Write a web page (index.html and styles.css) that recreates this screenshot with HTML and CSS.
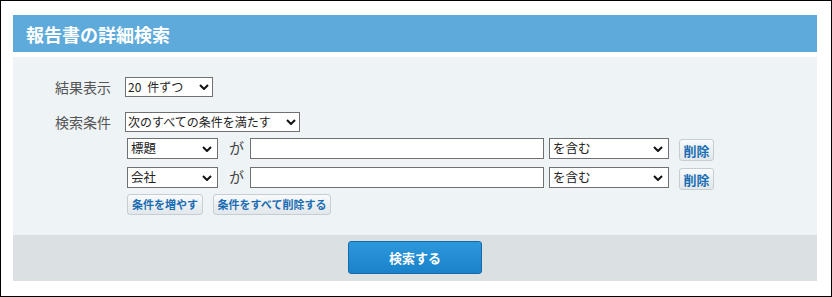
FILE: index.html
```html
<!DOCTYPE html>
<html lang="ja">
<head>
<meta charset="utf-8">
<title>報告書の詳細検索</title>
<link rel="stylesheet" href="styles.css">
</head>
<body>
<div class="frame">
  <div class="header"><h1 class="title">報告書の詳細検索</h1></div>
  <div class="panel">
    <div class="row row-count">
      <span class="label">結果表示</span>
      <div class="select sel-count"><span class="sel-text">20<span class="sp"></span>件ずつ</span><svg class="chev" width="10" height="6" viewBox="0 0 10 6"><path d="M1 1 L5 5 L9 1" /></svg></div>
    </div>
    <div class="row">
      <span class="label">検索条件</span>
      <div class="select sel-match"><span class="sel-text">次のすべての条件を満たす</span><svg class="chev" width="10" height="6" viewBox="0 0 10 6"><path d="M1 1 L5 5 L9 1" /></svg></div>
    </div>
    <div class="conditions">
      <div class="cond">
        <div class="select sel-field"><span class="sel-text">標題</span><svg class="chev" width="10" height="6" viewBox="0 0 10 6"><path d="M1 1 L5 5 L9 1" /></svg></div>
        <span class="ga">が</span>
        <input class="text-input" type="text">
        <div class="select sel-op"><span class="sel-text">を含む</span><svg class="chev" width="10" height="6" viewBox="0 0 10 6"><path d="M1 1 L5 5 L9 1" /></svg></div>
        <button class="btn btn-del">削除</button>
      </div>
      <div class="cond">
        <div class="select sel-field"><span class="sel-text">会社</span><svg class="chev" width="10" height="6" viewBox="0 0 10 6"><path d="M1 1 L5 5 L9 1" /></svg></div>
        <span class="ga">が</span>
        <input class="text-input" type="text">
        <div class="select sel-op"><span class="sel-text">を含む</span><svg class="chev" width="10" height="6" viewBox="0 0 10 6"><path d="M1 1 L5 5 L9 1" /></svg></div>
        <button class="btn btn-del">削除</button>
      </div>
      <div class="actions">
        <button class="btn btn-small btn-add">条件を増やす</button>
        <button class="btn btn-small btn-clear">条件をすべて削除する</button>
      </div>
    </div>
  </div>
  <div class="footer"><button class="btn-search">検索する</button></div>
</div>
</body>
</html>
```

FILE: styles.css
```css
* { box-sizing: border-box; }
html, body { margin: 0; padding: 0; background: #fff; }
body {
  font-family: "Noto Sans CJK JP", "Noto Sans", sans-serif;
  color: #333;
}
.frame {
  width: 832px;
  height: 297px;
  border: 1px solid #000;
  padding: 14px 14px 0 12px;
  background: #fff;
}
.header {
  height: 37px;
  background: #5eaadb;
  display: flex;
  align-items: center;
  padding-left: 13px;
}
.title {
  margin: 0;
  font-size: 18px;
  font-weight: bold;
  color: #fff;
  line-height: 1;
}
.panel {
  margin-top: 5px;
  height: 178px;
  background: #eef3f6;
  padding: 20px 0 0 42px;
}
.row {
  display: flex;
  align-items: center;
  height: 20px;
}
.row-count { margin-bottom: 15px; }
.label {
  width: 70px;
  font-size: 14px;
  color: #555;
  line-height: 1;
}
.select {
  display: flex;
  align-items: center;
  justify-content: space-between;
  background: #fff;
  border: 1px solid #707070;
  color: #222;
  line-height: 1;
}
.sp {
  display: inline-block;
  width: 6px;
}
.sel-count, .sel-match {
  height: 20px;
  font-size: 12px;
  padding: 0 3px 0 2px;
}
.sel-count { width: 88px; }
.sel-match { width: 175px; }
.chev path {
  fill: none;
  stroke: #111;
  stroke-width: 2;
}
.conditions {
  margin: 6px 0 0 72px;
}
.cond {
  display: flex;
  align-items: flex-start;
  height: 22px;
}
.cond + .cond { margin-top: 7px; }
.sel-field, .sel-op {
  height: 21px;
  font-size: 12.5px;
  padding: 0 5px 0 3px;
}
.sel-field { width: 91px; }
.sel-op { width: 120px; margin-left: 5px; }
.ga {
  width: 32px;
  padding-left: 11px;
  font-size: 15px;
  color: #444;
  line-height: 19px;
}
.text-input {
  width: 294px;
  height: 21px;
  margin: 0;
  border: 1px solid #707070;
  background: #fff;
  padding: 0 3px;
  font: inherit;
}
.btn {
  font-family: "Noto Sans CJK JP", "Noto Sans", sans-serif;
  font-weight: bold;
  color: #1a6db3;
  background: linear-gradient(#f8fafb, #e2e7eb);
  border: 1px solid #c6cdd3;
  border-radius: 3px;
  padding: 0;
  line-height: 1;
  display: flex;
  align-items: center;
  justify-content: center;
}
.btn-del {
  width: 35px;
  height: 22px;
  margin: 1px 0 0 10px;
  font-size: 13px;
}
.actions {
  display: flex;
  gap: 10px;
  margin-top: 5px;
}
.btn-small {
  height: 21px;
  font-size: 11px;
}
.btn-add { width: 76px; }
.btn-clear { width: 118px; }
.footer {
  height: 46px;
  background: #dbe0e3;
  display: flex;
  justify-content: center;
  padding-top: 6px;
}
.btn-search {
  width: 134px;
  height: 33px;
  border: 1px solid #176aa9;
  border-radius: 3px;
  background: linear-gradient(#2c98dc, #1a82ca);
  color: #fff;
  font-family: "Noto Sans CJK JP", "Noto Sans", sans-serif;
  font-size: 13px;
  font-weight: bold;
  padding: 0;
  line-height: 1;
}
```
